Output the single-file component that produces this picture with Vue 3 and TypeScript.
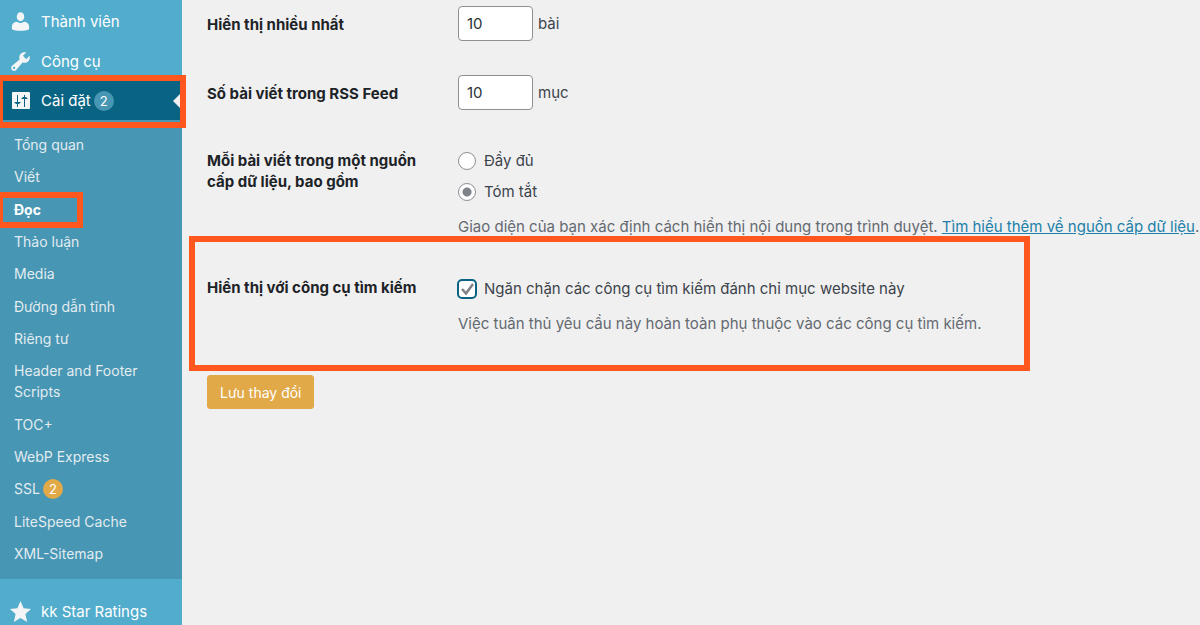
<script setup lang="ts">
import { ref } from 'vue'

interface SubItem {
  label: string
  badge?: number
  current?: boolean
}

const subItems: SubItem[] = [
  { label: 'Tổng quan' },
  { label: 'Viết' },
  { label: 'Đọc', current: true },
  { label: 'Thảo luận' },
  { label: 'Media' },
  { label: 'Đường dẫn tĩnh' },
  { label: 'Riêng tư' },
  { label: 'Header and Footer Scripts' },
  { label: 'TOC+' },
  { label: 'WebP Express' },
  { label: 'SSL', badge: 2 },
  { label: 'LiteSpeed Cache' },
  { label: 'XML-Sitemap' },
]

const postsPerPage = ref('10')
const postsPerRss = ref('10')
const feedMode = ref('summary')
const discourage = ref(true)
</script>

<template>
  <div class="admin">
    <nav class="sidebar" aria-label="Menu chính">
      <a href="#" class="top-item">
        <svg class="icon" viewBox="0 0 20 20" aria-hidden="true">
          <ellipse cx="10" cy="5.400" rx="3.600" ry="4.300" />
          <path d="M6.300 10.200c1 0 2.200 1.300 3.700 1.300s2.700-1.300 3.700-1.300c2.600.2 4.500 2.100 4.500 4.500v2.600c-2 1.200-4.700 1.600-8.200 1.600s-6.200-.4-8.200-1.600v-2.600c0-2.400 1.900-4.300 4.500-4.500z" />
        </svg>
        <span>Thành viên</span>
      </a>
      <a href="#" class="top-item">
        <svg class="icon" viewBox="1 1 18 18" aria-hidden="true">
          <path d="M16.680 9.770c-1.340 1.340-3.300 1.670-4.950.99l-5.410 6.520c-.99.99-2.590.99-3.580 0s-.99-2.590 0-3.570l6.520-5.420c-.68-1.650-.35-3.610.99-4.950 1.280-1.280 3.120-1.620 4.720-1.060l-2.890 2.890 2.820 2.820 2.860-2.870c.53 1.580.18 3.390-1.080 4.650zM3.810 16.210c.4.390 1.040.39 1.430 0 .4-.4.400-1.040 0-1.430-.39-.4-1.030-.4-1.430 0-.39.39-.39 1.030 0 1.430z" />
        </svg>
        <span>Công cụ</span>
      </a>
      <div class="settings">
        <a href="#" class="top-item active">
          <svg class="icon" viewBox="0 0 21 21" aria-hidden="true">
            <rect x="2" y="2" width="18" height="17" rx="1" />
            <path class="slider" d="M7.500 5v12M4.500 12.500h6M5.500 13.500h4M14.500 5v12M11.500 8.500h6M12.500 7.500h4" />
          </svg>
          <span>Cài đặt</span>
          <span class="badge blue">2</span>
          <span class="notch"></span>
        </a>
        <div class="mark mark-settings"></div>
      </div>
      <ul class="submenu">
        <li v-for="item in subItems" :key="item.label">
          <a href="#" :class="{ current: item.current }">{{ item.label }}<span v-if="item.badge" class="badge gold">{{ item.badge }}</span></a>
          <div v-if="item.current" class="mark mark-reading"></div>
        </li>
      </ul>
      <a href="#" class="top-item ratings">
        <svg class="icon star" viewBox="0 0 20 20" aria-hidden="true">
          <path d="M10 0l3 6.800 7 .7-5.300 4.900L16.300 20 10 16.100 3.700 20l1.600-7.600L0 7.500l7-.7z" />
        </svg>
        <span>kk Star Ratings</span>
      </a>
    </nav>

    <main class="content">
      <form @submit.prevent>
        <div class="row posts">
          <label class="heading" for="posts">Hiển thị nhiều nhất</label>
          <div class="field number">
            <input id="posts" v-model="postsPerPage" type="text" inputmode="numeric" />
            <span>bài</span>
          </div>
        </div>
        <div class="row rss">
          <label class="heading" for="rss">Số bài viết trong RSS Feed</label>
          <div class="field number">
            <input id="rss" v-model="postsPerRss" type="text" inputmode="numeric" />
            <span>mục</span>
          </div>
        </div>
        <div class="row feed" role="radiogroup" aria-labelledby="feed-heading">
          <div id="feed-heading" class="heading">Mỗi bài viết trong một nguồn cấp dữ liệu, bao gồm</div>
          <div class="field">
            <label class="choice"><input v-model="feedMode" type="radio" name="feed" value="full" />Đầy đủ</label>
            <label class="choice"><input v-model="feedMode" type="radio" name="feed" value="summary" />Tóm tắt</label>
            <p class="description">
              Giao diện của bạn xác định cách hiển thị nội dung trong trình duyệt.
              <a href="#">Tìm hiểu thêm về nguồn cấp dữ liệu</a>.
            </p>
          </div>
        </div>
        <div class="row search">
          <div class="heading">Hiển thị với công cụ tìm kiếm</div>
          <div class="field">
            <label class="choice">
              <span class="tick">
                <input v-model="discourage" type="checkbox" />
                <svg v-if="discourage" viewBox="0 0 20 20" aria-hidden="true"><path d="M5 10l4 4.500 7-9.500" /></svg>
              </span>
              Ngăn chặn các công cụ tìm kiếm đánh chỉ mục website này
            </label>
            <p class="description">Việc tuân thủ yêu cầu này hoàn toàn phụ thuộc vào các công cụ tìm kiếm.</p>
          </div>
          <div class="mark mark-search"></div>
        </div>
        <button type="submit" class="save">Lưu thay đổi</button>
      </form>
    </main>
  </div>
</template>

<style>
body {
  margin: 0;
  background: #f0f0f1;
  overflow: hidden;
}
</style>

<style scoped>
* {
  box-sizing: border-box;
}

.admin {
  display: flex;
  min-height: 100vh;
  font-family: Inter, "Noto Sans", sans-serif;
  font-size: 15px;
  line-height: 21px;
  color: #3c434a;
  background: #f0f0f1;
}

.sidebar {
  flex: 0 0 182px;
  display: flex;
  flex-direction: column;
  height: 100vh;
  padding-top: 1px;
  background: #52accc;
}

.top-item {
  flex: none;
  display: flex;
  align-items: center;
  height: 40px;
  padding-left: 10px;
  color: #fff;
  text-decoration: none;
}

.icon {
  width: 21px;
  height: 21px;
  margin-right: 10px;
  fill: #f3f5f6;
}

.slider {
  fill: none;
  stroke: #096484;
  stroke-width: 1;
}

.settings {
  position: relative;
}

.active {
  position: relative;
  height: 39px;
  background: #096484;
}

.notch {
  position: absolute;
  right: 0;
  top: 50%;
  margin-top: -9px;
  border: 9px solid transparent;
  border-right-color: #f0f0f1;
  border-left-width: 0;
}

.badge {
  display: inline-block;
  width: 20px;
  height: 20px;
  margin-left: 3px;
  border-radius: 50%;
  color: #fff;
  font-size: 13px;
  line-height: 20px;
  text-align: center;
}

.blue {
  background: #4796b3;
}

.gold {
  margin-top: -2px;
  margin-bottom: -2px;
  background: #e1a948;
}

.submenu {
  flex: none;
  display: flex;
  flex-direction: column;
  justify-content: space-between;
  min-height: 459px;
  margin: 0;
  padding: 14px 14px 15px;
  list-style: none;
  background: #4796b3;
}

.submenu li {
  position: relative;
}

.submenu a {
  display: block;
  color: #e2ecf1;
  font-size: 14px;
  text-decoration: none;
}

.submenu .current {
  color: #fff;
  font-weight: 700;
}

.ratings {
  flex: 1 0 46px;
  align-items: flex-start;
  padding-top: 22px;
}

.content {
  flex: 1;
  min-width: 0;
  padding: 6px 0 0 25px;
}

.row {
  position: relative;
  display: grid;
  grid-template-columns: 226px 1fr;
  column-gap: 25px;
}

.heading {
  padding-top: 8px;
  color: #1d2327;
  font-weight: 700;
}

.posts,
.rss {
  height: 69px;
}

.number {
  display: flex;
  align-items: flex-start;
  gap: 5px;
}

.number input {
  width: 75px;
  height: 35px;
  padding: 0 8px;
  border: 1px solid #8c8f94;
  border-radius: 4px;
  background: #fff;
  color: #2c3338;
  font: inherit;
}

.number span {
  padding-top: 7px;
}

.feed {
  height: 127px;
}

.feed .heading {
  padding-top: 6px;
}

.feed .field {
  padding-top: 6px;
}

.choice {
  display: flex;
  align-items: center;
  margin-bottom: 10px;
}

.choice input {
  appearance: none;
  flex: none;
  width: 18px;
  height: 18px;
  margin: 0 8px 0 0;
  border: 1px solid #8c8f94;
  border-radius: 50%;
  background: #fff;
}

.choice input[type="radio"]:checked {
  background: radial-gradient(circle, #7d8388 4px, #fff 5px);
}

.description {
  margin: 14px 0 0;
  color: #646970;
  white-space: nowrap;
}

.description a {
  color: #2080a8;
}

.search {
  height: 104px;
}

.search .heading {
  padding-top: 6px;
}

.search .field {
  padding-top: 7px;
}

.tick {
  position: relative;
  display: flex;
  margin: 0 7px 0 -1px;
}

.choice .tick input {
  width: 20px;
  height: 20px;
  margin: 0;
  border: 2px solid #096484;
  border-radius: 5px;
}

.tick svg {
  position: absolute;
  inset: 0;
  fill: none;
  stroke: #7d8388;
  stroke-width: 2.500;
}

.save {
  height: 34px;
  padding: 0 12px;
  border: 1px solid #e1a948;
  border-radius: 3px;
  background: #e1a948;
  color: #fff;
  font: inherit;
  font-size: 14px;
}

.mark {
  position: absolute;
  border: 6px solid #ff571d;
  pointer-events: none;
}

.mark-settings {
  inset: -6px -4px -8px -3px;
}

.mark-reading {
  left: -17px;
  right: 85px;
  top: -7px;
  bottom: -8px;
}

.mark-search {
  left: -18px;
  right: 170px;
  top: -35px;
  height: 135px;
}
</style>
